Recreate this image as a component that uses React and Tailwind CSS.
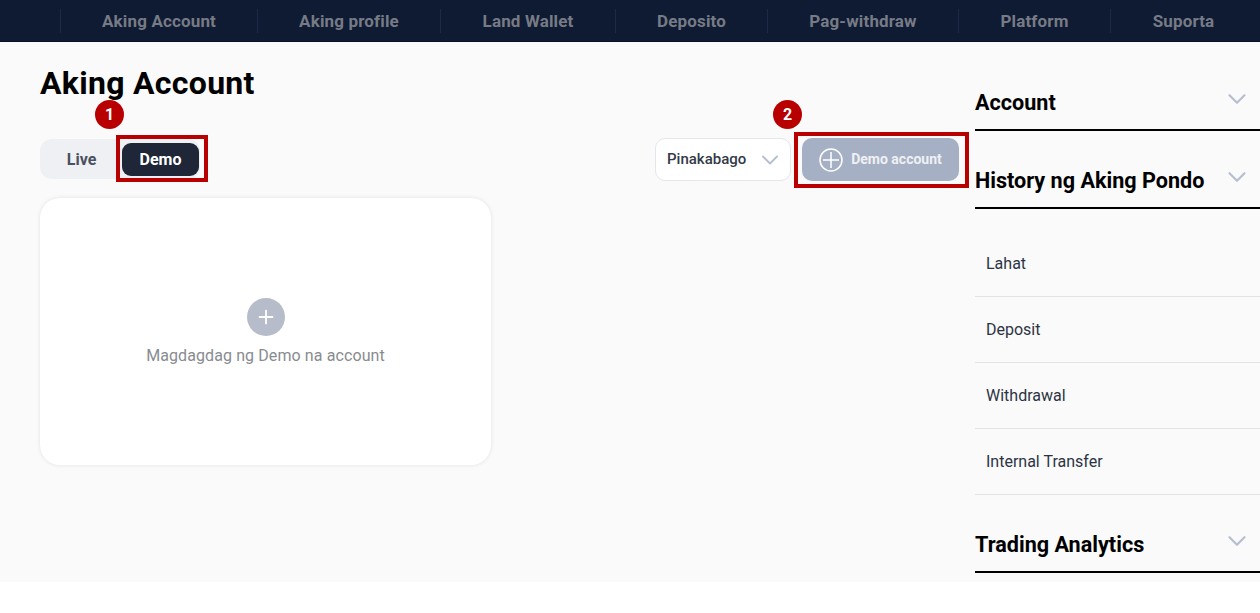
import { ChevronDown, Plus } from 'lucide-react'

const NAV = [
  { label: 'Aking Account', w: 'w-[197px]' },
  { label: 'Aking profile', w: 'w-[183px]' },
  { label: 'Land Wallet', w: 'w-[175px]' },
  { label: 'Deposito', w: 'w-[152px]' },
  { label: 'Pag-withdraw', w: 'w-[191px]' },
  { label: 'Platform', w: 'w-[152px]' },
  { label: 'Suporta', w: 'w-[146px]' },
]

const HISTORY = ['Lahat', 'Deposit', 'Withdrawal', 'Internal Transfer']

function Badge({ n, className }) {
  return (
    <span className={`absolute flex h-[29px] w-[29px] items-center justify-center rounded-full bg-[#b80000] text-[16px] font-bold text-white ${className}`}>
      {n}
    </span>
  )
}

function SideHeading({ title, className }) {
  return (
    <div className={`flex h-[44px] items-start justify-between border-b-2 border-black ${className}`}>
      <span className="text-[21.6px] leading-[32px] font-bold text-black">{title}</span>
      <ChevronDown className="mr-[8px] mt-[-3px] h-[30px] w-[30px] text-[#b6bfcf]" strokeWidth={1.75} />
    </div>
  )
}

export default function App() {
  return (
    <div className="min-h-[613px] bg-white font-['Roboto',sans-serif]">
      {/* Top nav */}
      <nav className="flex h-[42px] items-center border-b border-[#0a0f1e] bg-[#0f1a33] pl-[60px]">
        {NAV.map(({ label, w }) => (
          <div key={label} className={`flex h-[24px] items-center justify-center border-l border-[#1e2a45] pt-[2px] text-[17px] font-bold tracking-[0.15px] text-[#767b85] ${w}`}>
            {label}
          </div>
        ))}
      </nav>

      <div className="flex h-[540px] bg-[#fafafa]">
        {/* Main column */}
        <main className="w-[975px] shrink-0 pl-[40px] pr-[16px]">
          <h1 className="pt-[21px] text-[32px] leading-[40px] font-bold tracking-[0.3px] text-black">Aking Account</h1>

          <div className="mt-[36px] flex items-start justify-between">
            <div className="relative flex h-[40px] w-[160px] items-center rounded-[12px] bg-[#eef0f4]">
              <span className="w-[82px] pl-[1px] pt-px text-center text-[16px] font-bold text-[#4a5060]">Live</span>
              <span className="flex h-[33px] w-[77px] items-center justify-center rounded-[9px] bg-[#1f2638] pt-px text-[16px] font-bold text-white">Demo</span>
              <span className="absolute left-[76px] top-[-4px] h-[47px] w-[92px] border-[4px] border-[#b80000]" />
              <Badge n="1" className="left-[55px] top-[-39px]" />
            </div>

            <div className="flex items-start gap-[11px]">
              <div className="mt-[-1px] flex h-[43px] w-[136px] items-center justify-between rounded-[10px] border border-[#e4e6ea] bg-white pl-[11px] pr-[6px]">
                <span className="text-[15px] font-medium text-[#333a48]">Pinakabago</span>
                <ChevronDown className="h-[28px] w-[28px] text-[#b6bfcf]" strokeWidth={1.6} />
              </div>
              <div className="relative mt-[-1px] flex h-[43px] w-[157px] items-center justify-center gap-[8px] rounded-[10px] bg-[#a6b0c5]">
                <svg width="24" height="24" viewBox="0 0 24 24" fill="none" stroke="#fff" strokeWidth="1.5">
                  <circle cx="12" cy="12" r="11" />
                  <path d="M12 4v16M4 12h16" />
                </svg>
                <span className="text-[14px] font-bold text-[#eef0f4]">Demo account</span>
                <span className="absolute left-[-8px] top-[-6px] h-[56px] w-[175px] border-[4px] border-[#b80000]" />
                <Badge n="2" className="left-[-29px] top-[-38px]" />
              </div>
            </div>
          </div>

          {/* Empty state card */}
          <div className="mt-[17px] flex h-[267px] w-[451px] flex-col items-center rounded-[20px] bg-white pt-[100px] shadow-[0_0_4px_rgba(0,0,0,0.1)]">
            <div className="flex h-[38px] w-[38px] items-center justify-center rounded-full bg-[#b6bcc9]">
              <Plus className="h-[22px] w-[22px] text-white" strokeWidth={2} />
            </div>
            <span className="mt-[8px] text-[16px] leading-[24px] tracking-[0.1px] text-[#888b90]">Magdagdag ng Demo na account</span>
          </div>
        </main>

        {/* Right sidebar */}
        <aside className="flex-1">
          <SideHeading title="Account" className="mt-[45px]" />
          <SideHeading title="History ng Aking Pondo" className="mt-[34px]" />
          <ul className="mt-[22px]">
            {HISTORY.map((item) => (
              <li key={item} className="flex h-[66px] items-center border-b border-[#e2e3e6] pl-[11px] text-[16px] text-[#2c3444]">
                {item}
              </li>
            ))}
          </ul>
          <SideHeading title="Trading Analytics" className="mt-[34px]" />
        </aside>
      </div>
    </div>
  )
}
